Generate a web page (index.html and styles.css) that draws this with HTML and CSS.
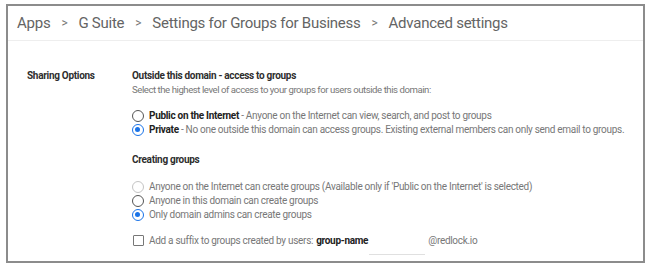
FILE: index.html
```html
<!DOCTYPE html>
<html>
<head>
<meta charset="utf-8">
<link rel="stylesheet" href="styles.css">
</head>
<body>
<div class="frame">
  <div class="crumbs">
    <span>Apps</span><span class="sep">&gt;</span><span>G Suite</span><span class="sep">&gt;</span><span>Settings for Groups for Business</span><span class="sep">&gt;</span><span>Advanced settings</span>
  </div>
  <div class="content">
    <div class="label">Sharing Options</div>
    <div class="settings">
      <div class="title">Outside this domain - access to groups</div>
      <div class="desc">Select the highest level of access to your groups for users outside this domain:</div>
      <div class="options first">
        <div class="opt"><span class="radio"></span><span><b>Public on the Internet</b> <span class="muted">- Anyone on the Internet can view, search, and post to groups</span></span></div>
        <div class="opt"><span class="radio on"></span><span><b>Private</b> <span class="muted">- No one outside this domain can access groups. Existing external members can only send email to groups.</span></span></div>
      </div>
      <div class="title second">Creating groups</div>
      <div class="options third">
        <div class="opt"><span class="radio off"></span><span class="muted">Anyone on the Internet can create groups (Available only if 'Public on the Internet' is selected)</span></div>
        <div class="opt"><span class="radio"></span><span class="muted">Anyone in this domain can create groups</span></div>
        <div class="opt"><span class="radio on"></span><span class="muted">Only domain admins can create groups</span></div>
      </div>
      <div class="suffix">
        <span class="check"></span>
        <span class="muted">Add a suffix to groups created by users:</span>
        <b class="gname">group-name</b>
        <span class="field"></span>
        <span class="muted domain">@redlock.io</span>
      </div>
    </div>
  </div>
</div>
</body>
</html>
```

FILE: styles.css
```css
* { box-sizing: border-box; }
html, body { margin: 0; background: #fff; }
body {
  padding: 4px 5px 6px 6px;
  font-family: Roboto, "Liberation Sans", sans-serif;
}
.frame {
  height: 259px;
  border: 2px solid #8c8c8c;
  background: #fff;
}
.crumbs {
  height: 35px;
  border-bottom: 1px solid #eeeeee;
  display: flex;
  align-items: center;
  padding-left: 9px;
  font-size: 15px;
  letter-spacing: -0.25px;
  color: #646464;
}
.sep { margin: 0 11px; font-size: 12px; color: #777; }
.content {
  display: flex;
  padding: 28px 0 0 19px;
  font-size: 10px;
  letter-spacing: -0.3px;
  line-height: 14px;
}
.label {
  width: 105px;
  font-weight: bold;
  color: #2e2e2e;
}
.settings { flex: 1; }
.title { font-weight: bold; color: #2e2e2e; }
.desc { color: #777; font-size: 9.6px; letter-spacing: -0.45px; }
.muted { color: #777; }
b { color: #222; }
.options.first { margin-top: 12px; }
.title.second { margin-top: 16px; }
.options.third { margin-top: 13px; }
.opt { display: flex; align-items: center; height: 14px; white-space: nowrap; }
.radio {
  width: 12px; height: 12px;
  border: 1.5px solid #555;
  border-radius: 50%;
  margin-right: 5px;
  flex: none;
  position: relative;
}
.radio.off { border-color: #c4c4c4; }
.radio.on { border-color: #1a73e8; }
.radio.on::after {
  content: "";
  position: absolute;
  left: 2px; top: 2px;
  width: 5px; height: 5px;
  border-radius: 50%;
  background: #1a73e8;
}
.suffix {
  margin-top: 12px;
  display: flex;
  align-items: flex-start;
  height: 22px;
  line-height: 14px;
  white-space: nowrap;
}
.check {
  width: 11px; height: 11px;
  border: 1.5px solid #777;
  border-radius: 1px;
  margin: 1px 5px 0 1px;
  flex: none;
}
.gname { margin-left: 3px; }
.field {
  width: 56px;
  height: 21px;
  border-bottom: 1px solid #e0e0e0;
  margin-left: 1px;
}
.domain { margin-left: 3px; }
```
